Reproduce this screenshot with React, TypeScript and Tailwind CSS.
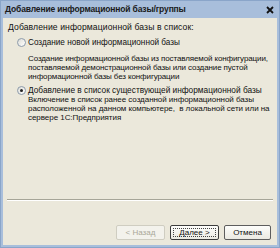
import React from 'react';

function Radio({ checked }: { checked?: boolean }) {
  return (
    <span className="w-[9px] h-[9px] rounded-full border border-[#8d9bab] bg-gradient-to-br from-[#dcdcd6] to-[#ffffff] flex items-center justify-center shrink-0">
      {checked && <span className="w-[3px] h-[3px] rounded-full bg-[#222]" />}
    </span>
  );
}

export default function App() {
  return (
    <div className="w-[280px] h-[248px] flex flex-col bg-[#a8bedb] border border-[#8aa5c9] font-['Liberation_Sans',Arial,sans-serif] text-[#111] select-none overflow-hidden">
      <div className="h-[17px] flex items-center justify-between pl-[4px] pr-[5px] shrink-0">
        <span className="text-[8.5px] font-bold tracking-[-0.15px] text-[#1a1a1a] whitespace-nowrap">
          Добавление информационной базы/группы
        </span>
        <svg width="8" height="8" viewBox="0 0 8 8" className="mt-[1px]">
          <path d="M1 1 L7 7 M7 1 L1 7" stroke="#111" strokeWidth="1.8" />
        </svg>
      </div>

      <div className="flex-1 mx-[2px] mb-[2px] bg-[#ebe8db] flex flex-col text-[8px] leading-[9px] whitespace-nowrap">
        <div className="pt-[5px] pl-[5px] text-[8.6px] tracking-[0.1px]">Добавление информационной базы в список:</div>

        <div className="mt-[6px] pl-[14px] flex items-center gap-[2px] text-[8.2px]">
          <Radio />
          <span>Создание новой информационной базы</span>
        </div>
        <div className="mt-[7px] pl-[25px] tracking-[-0.12px] flex flex-col">
          <span>Создание информационной базы из поставляемой конфигурации,</span>
          <span>поставляемой демонстрационной базы или создание пустой</span>
          <span>информационной базы без конфигурации</span>
        </div>

        <div className="mt-[5px] pl-[14px] flex items-center gap-[2px] text-[8.3px]">
          <Radio checked />
          <span>Добавление в список существующей информационной базы</span>
        </div>
        <div className="pl-[25px] tracking-[-0.05px] flex flex-col">
          <span>Включение в список ранее созданной информационной базы</span>
          <span>расположенной на данном компьютере, &nbsp;в локальной сети или на</span>
          <span>сервере 1С:Предприятия</span>
        </div>

        <div className="mt-auto mx-[4px] border-t border-[#a6a598] border-b border-b-white" />

        <div className="flex justify-end gap-[5px] pt-[24px] pb-[5px] pr-[6px]">
          <div className="w-[49px] h-[15px] border border-[#cfcdc1] rounded-[2px] bg-[#f3f2ec] flex items-center justify-center text-[#aaa899]">
            &lt; Назад
          </div>
          <div className="w-[49px] h-[15px] border border-[#3c3c3c] rounded-[2px] bg-gradient-to-b from-[#fdfdfb] to-[#ebeae2] flex items-center justify-center p-[2px]">
            <div className="w-full h-full border border-dotted border-[#444] flex items-center justify-center">
              Далее &gt;
            </div>
          </div>
          <div className="w-[47px] h-[15px] border border-[#5d5d5d] rounded-[2px] bg-gradient-to-b from-[#fdfdfb] to-[#ebeae2] flex items-center justify-center">
            Отмена
          </div>
        </div>
      </div>
    </div>
  );
}
